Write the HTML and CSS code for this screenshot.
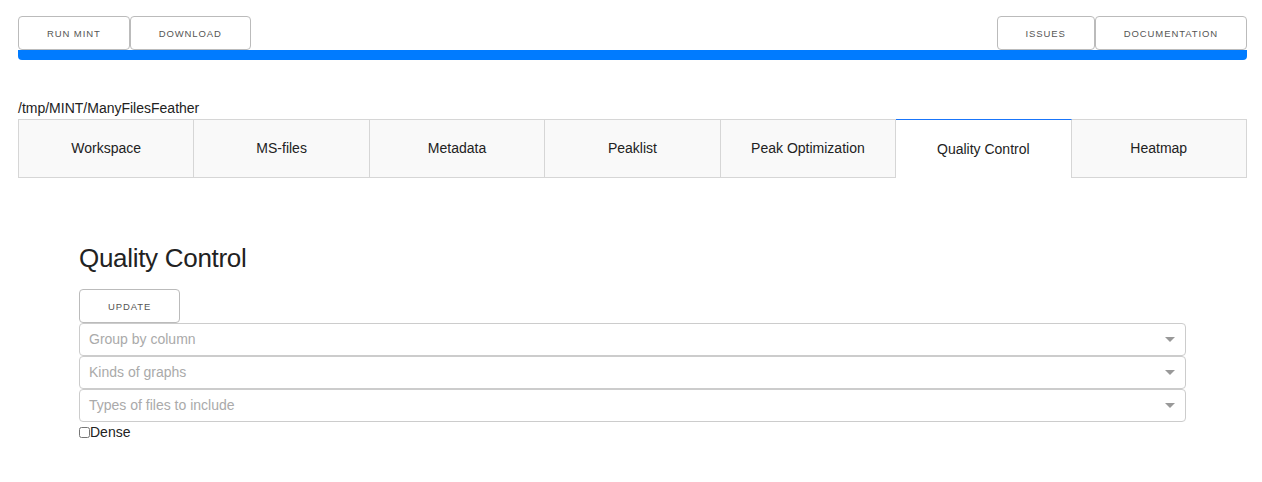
FILE: index.html
```html
<!DOCTYPE html>
<html>
<head>
<meta charset="utf-8">
<link rel="stylesheet" href="styles.css">
</head>
<body>
<div class="app">
  <div class="topbar">
    <div class="btn-group">
      <button class="btn">RUN MINT</button>
      <button class="btn">DOWNLOAD</button>
    </div>
    <div class="btn-group">
      <button class="btn">ISSUES</button>
      <button class="btn">DOCUMENTATION</button>
    </div>
  </div>
  <div class="progress"></div>
  <div class="path">/tmp/MINT/ManyFilesFeather</div>
  <div class="tabs">
    <div class="tab">Workspace</div>
    <div class="tab">MS-files</div>
    <div class="tab">Metadata</div>
    <div class="tab">Peaklist</div>
    <div class="tab">Peak Optimization</div>
    <div class="tab tab-selected">Quality Control</div>
    <div class="tab">Heatmap</div>
  </div>
  <div class="content">
    <h1 class="title">Quality Control</h1>
    <button class="btn btn-update">UPDATE</button>
    <div class="dropdown"><span class="placeholder">Group by column</span><span class="arrow"></span></div>
    <div class="dropdown"><span class="placeholder">Kinds of graphs</span><span class="arrow"></span></div>
    <div class="dropdown"><span class="placeholder">Types of files to include</span><span class="arrow"></span></div>
    <label class="check"><input type="checkbox" class="cb">Dense</label>
  </div>
</div>
</body>
</html>
```
FILE: styles.css
```css
html, body {
  margin: 0;
  padding: 0;
  background: #fff;
}
body {
  font-family: "Liberation Sans", Arial, sans-serif;
  color: #222;
}
.app {
  padding: 16px 15px 0 18px;
}
.topbar {
  display: flex;
  justify-content: space-between;
}
.btn-group {
  display: flex;
}
.btn {
  height: 34px;
  padding: 1px 28px 0;
  border: 1px solid #bbb;
  border-radius: 4px;
  background: #fff;
  color: #555;
  font-family: "Liberation Sans", Arial, sans-serif;
  font-size: 9.5px;
  letter-spacing: 0.9px;
  margin: 0;
  box-sizing: border-box;
}
.progress {
  height: 10px;
  background: #007bff;
  border-radius: 0 0 4px 4px;
}
.path {
  margin-top: 40px;
  font-size: 14px;
  color: #222;
  line-height: 16px;
  height: 19px;
}
.tabs {
  display: flex;
}
.tab {
  flex: 1;
  height: 59px;
  box-sizing: border-box;
  border: 1px solid #d6d6d6;
  border-left: none;
  background: #f9f9f9;
  display: flex;
  align-items: center;
  justify-content: center;
  font-size: 14px;
  color: #222;
  padding-bottom: 2px;
}
.tab:first-child {
  border-left: 1px solid #d6d6d6;
}
.tab-selected {
  background: #fff;
  border-top: 1px solid #1975fa;
  border-bottom: none;
  padding-bottom: 0;
}
.content {
  padding: 0 61px;
}
.title {
  margin: 64px 0 15px;
  font-size: 26px;
  font-weight: 300;
  line-height: 32px;
  color: #222;
  letter-spacing: -0.3px;
}
.btn-update {
  display: block;
}
.dropdown {
  height: 33px;
  box-sizing: border-box;
  border: 1px solid #ccc;
  border-radius: 4px;
  display: flex;
  align-items: center;
  justify-content: space-between;
  padding: 0 10px 1px 9px;
}
.placeholder {
  color: #aaa;
  font-size: 14px;
}
.arrow {
  width: 0;
  height: 0;
  border-left: 5px solid transparent;
  border-right: 5px solid transparent;
  border-top: 5px solid #999;
}
.check {
  display: flex;
  align-items: center;
  font-size: 14px;
  margin-top: 2px;
}
.cb {
  margin: 0;
  width: 11px;
  height: 11px;
}
```
